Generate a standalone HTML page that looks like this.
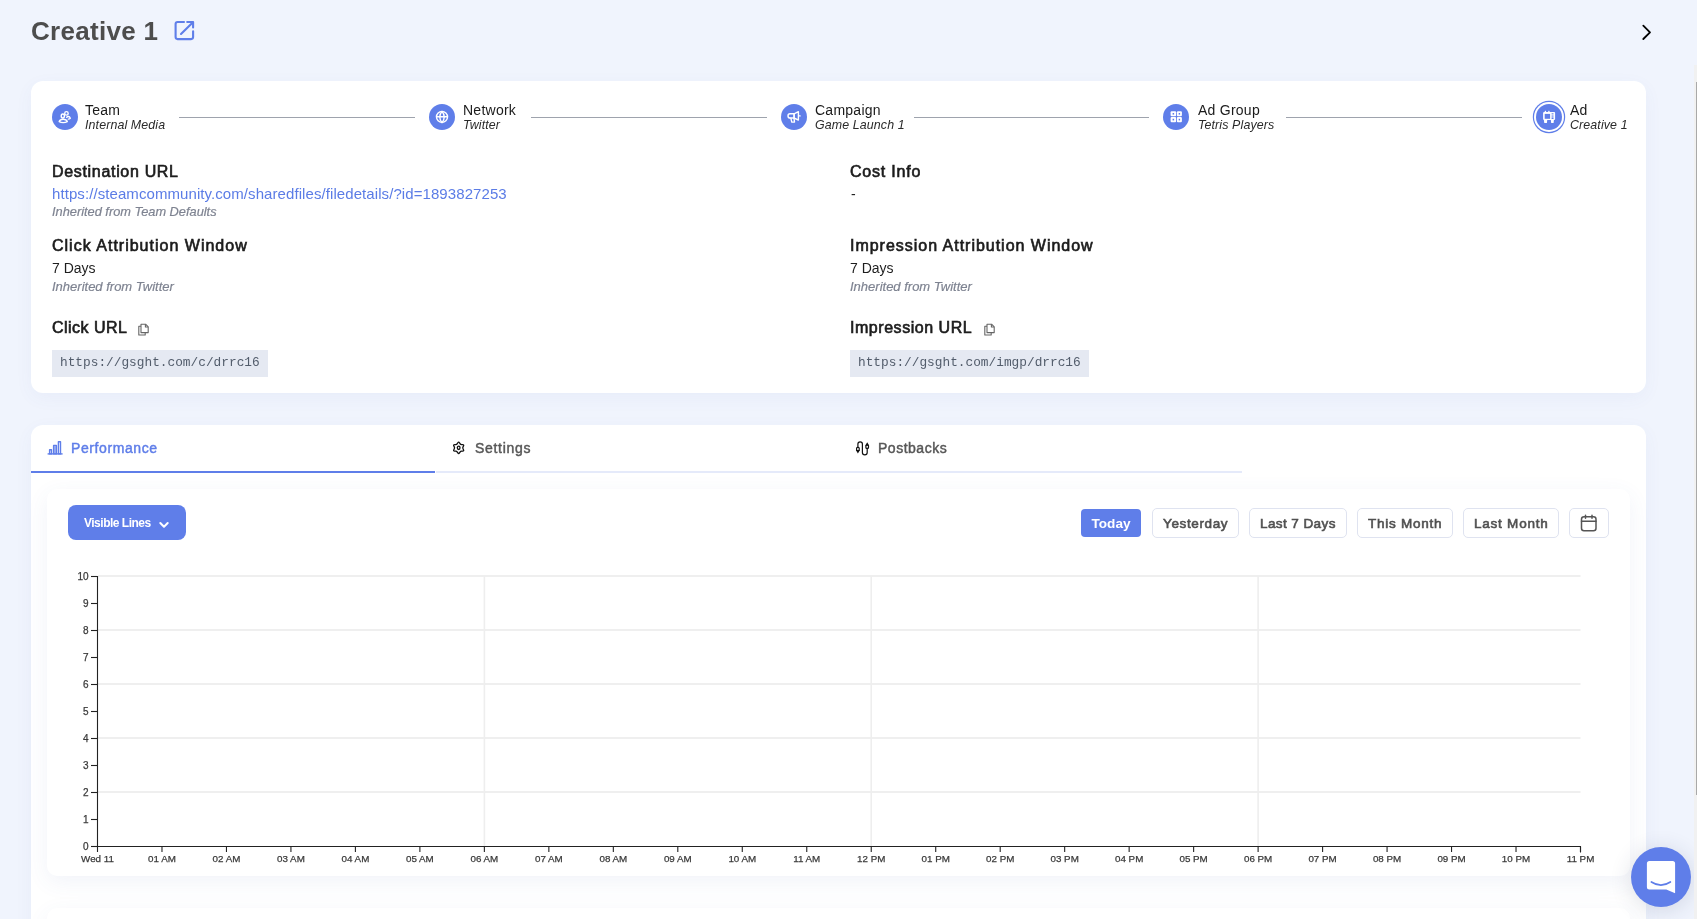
<!DOCTYPE html>
<html><head><meta charset="utf-8"><style>
html,body{margin:0;padding:0;}
body{width:1697px;height:919px;overflow:hidden;background:#f0f4fd;position:relative;font-family:'Liberation Sans', sans-serif;}
.a{position:absolute;box-sizing:content-box;}
.t{position:absolute;white-space:nowrap;line-height:1;will-change:transform;}
.c{text-align:center;font-family:'Liberation Sans', sans-serif;will-change:transform;}
</style></head><body>
<div class="t" style="left:30.80px;top:17.99px;font-size:26px;font-weight:bold;font-style:normal;color:#4d4d4d;letter-spacing:0.300px;font-family:'Liberation Sans', sans-serif;">Creative 1</div>
<svg class="a" style="left:170px;top:17px" width="28" height="28" viewBox="0 0 28 28" fill="none" stroke="#5f7ee9" stroke-width="2.1" stroke-linecap="round" stroke-linejoin="round"><path d="M14 5H7.6a2 2 0 0 0-2 2V20.1a2 2 0 0 0 2 2H21.1a2 2 0 0 0 2-2V14.2"/><path d="M17.2 5H23.1V10.4"/><path d="M22.7 5.4 11 17"/></svg>
<svg class="a" style="left:1636px;top:20px" width="24" height="24" viewBox="0 0 24 24" fill="none" stroke="#000" stroke-width="1.8" stroke-linecap="round" stroke-linejoin="round"><path d="M7.3 5.7 14 12.3 7.3 19"/></svg>
<div class="a" style="left:31px;top:81px;width:1615px;height:312px;background:#fff;border-radius:12px;box-shadow:0 5px 18px rgba(70,95,170,0.05)"></div>
<div class="a" style="left:52px;top:104px;width:26px;height:26px;background:#5f7ee9;border-radius:50%;"></div>
<svg class="a" style="left:52px;top:104px" width="26" height="26" viewBox="0 0 26 26" fill="none" stroke="#fff" stroke-width="1.4" stroke-linecap="round" stroke-linejoin="round"><ellipse cx="10.8" cy="12" rx="1.6" ry="2"/><ellipse cx="14.45" cy="9.4" rx="1.75" ry="1.75"/><path d="M7.2 17.6C7.8 15.9 9.3 15.2 11.2 15.2S14.6 15.9 15.3 17.6C14.1 18.3 12.7 18.6 11.2 18.6S8.4 18.3 7.2 17.6Z"/><path d="M14.7 13.2C15.2 12.7 15.8 12.5 16.3 12.5 17.2 12.5 17.9 13.1 18.3 14.2 17.8 14.7 17.1 15 16.3 15.1"/></svg>
<div class="t" style="left:85.40px;top:103.15px;font-size:14px;font-weight:normal;font-style:normal;color:#1a1a1a;letter-spacing:0.250px;font-family:'Liberation Sans', sans-serif;">Team</div>
<div class="t" style="left:85.40px;top:118.90px;font-size:12.4px;font-weight:normal;font-style:italic;color:#2a2a2a;letter-spacing:0.120px;font-family:'Liberation Sans', sans-serif;">Internal Media</div>
<div class="a" style="left:429px;top:104px;width:26px;height:26px;background:#5f7ee9;border-radius:50%;"></div>
<svg class="a" style="left:429px;top:104px" width="26" height="26" viewBox="0 0 26 26" fill="none" stroke="#fff" stroke-width="1.4" stroke-linecap="round" stroke-linejoin="round"><circle cx="13" cy="12.95" r="5.5"/><path d="M7.5 12.8h11"/><path d="M13 7.45c-1.5 1.5-2.2 3.5-2.2 5.5s.7 4 2.2 5.5c1.5-1.5 2.2-3.5 2.2-5.5s-.7-4-2.2-5.5z"/></svg>
<div class="t" style="left:462.80px;top:103.15px;font-size:14px;font-weight:normal;font-style:normal;color:#1a1a1a;letter-spacing:0.250px;font-family:'Liberation Sans', sans-serif;">Network</div>
<div class="t" style="left:462.80px;top:118.90px;font-size:12.4px;font-weight:normal;font-style:italic;color:#2a2a2a;letter-spacing:0.120px;font-family:'Liberation Sans', sans-serif;">Twitter</div>
<div class="a" style="left:781px;top:104px;width:26px;height:26px;background:#5f7ee9;border-radius:50%;"></div>
<svg class="a" style="left:781px;top:104px" width="26" height="26" viewBox="0 0 26 26" fill="none" stroke="#fff" stroke-width="1.4" stroke-linecap="round" stroke-linejoin="round"><path d="M13.1 9.8H9.1a2.1 2.1 0 0 0 0 4.2H13.1Z"/><path d="M13.1 9.8 17.4 7.7V16.1L13.1 14Z"/><path d="M17.9 11.9h1.2"/><path d="M9.9 14.3 10.8 18.1H13.5L13 14.3"/></svg>
<div class="t" style="left:814.70px;top:103.15px;font-size:14px;font-weight:normal;font-style:normal;color:#1a1a1a;letter-spacing:0.250px;font-family:'Liberation Sans', sans-serif;">Campaign</div>
<div class="t" style="left:814.70px;top:118.90px;font-size:12.4px;font-weight:normal;font-style:italic;color:#2a2a2a;letter-spacing:0.120px;font-family:'Liberation Sans', sans-serif;">Game Launch 1</div>
<div class="a" style="left:1163.2px;top:104px;width:26px;height:26px;background:#5f7ee9;border-radius:50%;"></div>
<svg class="a" style="left:1163.2px;top:104px" width="26" height="26" viewBox="0 0 26 26" fill="none" stroke="#fff" stroke-width="1.4" stroke-linecap="round" stroke-linejoin="round"><g fill="#fff" stroke="none"><rect x="7.6" y="7.2" width="5.5" height="5.1" rx="1"/><rect x="13.9" y="7.2" width="5" height="5.1" rx="1"/><rect x="7.6" y="13" width="5.5" height="5.2" rx="1"/><rect x="13.9" y="13" width="5" height="5.2" rx="1"/></g><g fill="#5f7ee9" stroke="none"><rect x="9.6" y="9" width="1.5" height="1.6"/><rect x="15.7" y="9" width="1.4" height="1.6"/><rect x="9.6" y="14.8" width="1.5" height="1.6"/><rect x="15.7" y="14.8" width="1.4" height="1.6"/></g></svg>
<div class="t" style="left:1197.50px;top:103.15px;font-size:14px;font-weight:normal;font-style:normal;color:#1a1a1a;letter-spacing:0.250px;font-family:'Liberation Sans', sans-serif;">Ad Group</div>
<div class="t" style="left:1197.50px;top:118.90px;font-size:12.4px;font-weight:normal;font-style:italic;color:#2a2a2a;letter-spacing:0.120px;font-family:'Liberation Sans', sans-serif;">Tetris Players</div>
<div class="a" style="left:1536px;top:104px;width:26px;height:26px;background:#5f7ee9;border-radius:50%;box-shadow:0 0 0 2px #fff,0 0 0 3.2px #5f7ee9;"></div>
<svg class="a" style="left:1536px;top:104px" width="26" height="26" viewBox="0 0 26 26" fill="none" stroke="#fff" stroke-width="1.4" stroke-linecap="round" stroke-linejoin="round"><g fill="#fff" stroke="none"><rect x="7.1" y="8" width="12" height="7.9" rx="1"/><path d="M7.8 15.6H11.3L10.9 19H8.3Z"/><path d="M14.8 15.6H18L17.6 19H15.2Z"/><rect x="8.7" y="6.7" width="1.4" height="1.6" rx=".5"/><rect x="12.2" y="6.7" width="1.4" height="1.6" rx=".5"/></g><g fill="#5f7ee9" stroke="none"><rect x="8.7" y="9.9" width="5.4" height="4.9"/><rect x="15.6" y="9.3" width="1.9" height="1.1"/><rect x="15.6" y="11.5" width="1.9" height="1.1"/><rect x="15.6" y="13.4" width="1.9" height="1.6"/></g></svg>
<div class="t" style="left:1569.80px;top:103.15px;font-size:14px;font-weight:normal;font-style:normal;color:#1a1a1a;letter-spacing:0.250px;font-family:'Liberation Sans', sans-serif;">Ad</div>
<div class="t" style="left:1569.80px;top:118.90px;font-size:12.4px;font-weight:normal;font-style:italic;color:#2a2a2a;letter-spacing:0.120px;font-family:'Liberation Sans', sans-serif;">Creative 1</div>
<div class="a" style="left:179px;top:116.5px;width:236px;height:1px;background:#9ea3ad"></div>
<div class="a" style="left:531px;top:116.5px;width:236px;height:1px;background:#9ea3ad"></div>
<div class="a" style="left:914px;top:116.5px;width:235px;height:1px;background:#9ea3ad"></div>
<div class="a" style="left:1286px;top:116.5px;width:236px;height:1px;background:#9ea3ad"></div>
<div class="t" style="left:52.10px;top:164.26px;font-size:16px;font-weight:normal;font-style:normal;color:#1c1c1c;letter-spacing:0.679px;font-family:'Liberation Sans', sans-serif;-webkit-text-stroke:0.65px #1c1c1c;">Destination URL</div>
<div class="t" style="left:52.00px;top:185.70px;font-size:15px;font-weight:normal;font-style:normal;color:#5b7ce6;letter-spacing:0.080px;font-family:'Liberation Sans', sans-serif;">https://steamcommunity.com/sharedfiles/filedetails/?id=1893827253</div>
<div class="t" style="left:51.70px;top:205.76px;font-size:12.8px;font-weight:normal;font-style:italic;color:#7e8391;letter-spacing:0.000px;font-family:'Liberation Sans', sans-serif;-webkit-text-stroke:0.2px #7e8391;">Inherited from Team Defaults</div>
<div class="t" style="left:52.10px;top:237.96px;font-size:16px;font-weight:normal;font-style:normal;color:#1c1c1c;letter-spacing:1.004px;font-family:'Liberation Sans', sans-serif;-webkit-text-stroke:0.65px #1c1c1c;">Click Attribution Window</div>
<div class="t" style="left:51.70px;top:260.95px;font-size:14px;font-weight:normal;font-style:normal;color:#1e1e1e;letter-spacing:0.000px;font-family:'Liberation Sans', sans-serif;">7 Days</div>
<div class="t" style="left:51.70px;top:279.70px;font-size:13px;font-weight:normal;font-style:italic;color:#7e8391;letter-spacing:0.000px;font-family:'Liberation Sans', sans-serif;-webkit-text-stroke:0.2px #7e8391;">Inherited from Twitter</div>
<div class="t" style="left:52.10px;top:320.26px;font-size:16px;font-weight:normal;font-style:normal;color:#1c1c1c;letter-spacing:0.473px;font-family:'Liberation Sans', sans-serif;-webkit-text-stroke:0.65px #1c1c1c;">Click URL</div>
<div class="t" style="left:850.30px;top:164.26px;font-size:16px;font-weight:normal;font-style:normal;color:#1c1c1c;letter-spacing:0.784px;font-family:'Liberation Sans', sans-serif;-webkit-text-stroke:0.65px #1c1c1c;">Cost Info</div>
<div class="t" style="left:850.70px;top:186.55px;font-size:14px;font-weight:normal;font-style:normal;color:#222;letter-spacing:0.000px;font-family:'Liberation Sans', sans-serif;">-</div>
<div class="t" style="left:850.30px;top:237.96px;font-size:16px;font-weight:normal;font-style:normal;color:#1c1c1c;letter-spacing:0.979px;font-family:'Liberation Sans', sans-serif;-webkit-text-stroke:0.65px #1c1c1c;">Impression Attribution Window</div>
<div class="t" style="left:849.90px;top:260.95px;font-size:14px;font-weight:normal;font-style:normal;color:#1e1e1e;letter-spacing:0.000px;font-family:'Liberation Sans', sans-serif;">7 Days</div>
<div class="t" style="left:849.90px;top:279.70px;font-size:13px;font-weight:normal;font-style:italic;color:#7e8391;letter-spacing:0.000px;font-family:'Liberation Sans', sans-serif;-webkit-text-stroke:0.2px #7e8391;">Inherited from Twitter</div>
<div class="t" style="left:850.30px;top:320.26px;font-size:16px;font-weight:normal;font-style:normal;color:#1c1c1c;letter-spacing:0.539px;font-family:'Liberation Sans', sans-serif;-webkit-text-stroke:0.65px #1c1c1c;">Impression URL</div>
<svg class="a" style="left:137px;top:322px" width="13" height="14" viewBox="0 0 13 14" fill="none" stroke="#666" stroke-width="1.1" stroke-linejoin="round"><path d="M4 2.2h4.6l2.6 2.6v5.8H4z"/><path d="M8.4 2.2v2.8h2.8"/><path d="M4 4.3H1.8V13h6.4v-2.4"/></svg>
<svg class="a" style="left:983px;top:322px" width="13" height="14" viewBox="0 0 13 14" fill="none" stroke="#666" stroke-width="1.1" stroke-linejoin="round"><path d="M4 2.2h4.6l2.6 2.6v5.8H4z"/><path d="M8.4 2.2v2.8h2.8"/><path d="M4 4.3H1.8V13h6.4v-2.4"/></svg>
<div class="a" style="left:52px;top:350px;width:216px;height:27px;background:#e5e9f2"></div>
<div class="a" style="left:850px;top:350px;width:239px;height:27px;background:#e5e9f2"></div>
<div class="t" style="left:60.30px;top:357.36px;font-size:12.8px;font-weight:normal;font-style:normal;color:#525c6b;letter-spacing:0.000px;font-family:'Liberation Mono', monospace;">https://gsght.com/c/drrc16</div>
<div class="t" style="left:858.40px;top:357.36px;font-size:12.8px;font-weight:normal;font-style:normal;color:#525c6b;letter-spacing:0.000px;font-family:'Liberation Mono', monospace;">https://gsght.com/imgp/drrc16</div>
<div class="a" style="left:31px;top:425px;width:1615px;height:600px;background:#fff;border-radius:12px;box-shadow:0 5px 18px rgba(70,95,170,0.05)"></div>
<div class="a" style="left:31px;top:471px;width:404px;height:2px;background:#5f7ee9"></div>
<div class="a" style="left:436px;top:471px;width:806px;height:2px;background:#e5eafa"></div>
<svg class="a" style="left:44px;top:438px" width="22" height="20" viewBox="0 0 22 20" fill="none" stroke="#5f7ee9" stroke-width="1.4" stroke-linejoin="round"><path d="M3.6 15.9h15"/><rect x="5.6" y="11.8" width="1.9" height="4.1"/><rect x="9.6" y="7.4" width="2.8" height="8.5" fill="#5f7ee9" fill-opacity=".55"/><rect x="14.4" y="3.8" width="2.1" height="12.1"/></svg>
<div class="t" style="left:70.60px;top:441.35px;font-size:14px;font-weight:normal;font-style:normal;color:#5f7ee9;letter-spacing:0.596px;font-family:'Liberation Sans', sans-serif;-webkit-text-stroke:0.45px #5f7ee9;">Performance</div>
<svg class="a" style="left:448px;top:438px" width="22" height="20" viewBox="0 0 22 20" fill="none" stroke="#111" stroke-width="1.3" stroke-linejoin="round"><path d="M9.85 4.74 Q10.66 3.45 11.47 4.74 L12.01 5.60 Q12.59 6.52 13.67 6.56 L14.68 6.59 Q16.20 6.65 15.49 7.99 L15.02 8.89 Q14.51 9.85 15.02 10.81 L15.49 11.71 Q16.20 13.05 14.68 13.11 L13.67 13.14 Q12.59 13.18 12.01 14.10 L11.47 14.96 Q10.66 16.25 9.85 14.96 L9.31 14.10 Q8.74 13.18 7.65 13.14 L6.64 13.11 Q5.12 13.05 5.83 11.71 L6.30 10.81 Q6.81 9.85 6.30 8.89 L5.83 7.99 Q5.12 6.65 6.64 6.59 L7.65 6.56 Q8.73 6.52 9.31 5.60Z"/><ellipse cx="10.66" cy="9.85" rx="1.35" ry="1.65"/></svg>
<div class="t" style="left:474.70px;top:441.15px;font-size:14px;font-weight:normal;font-style:normal;color:#575757;letter-spacing:0.702px;font-family:'Liberation Sans', sans-serif;-webkit-text-stroke:0.45px #575757;">Settings</div>
<svg class="a" style="left:852px;top:438px" width="22" height="20" viewBox="0 0 22 20" fill="none" stroke="#111" stroke-width="1.2" stroke-linecap="round"><path d="M5.9 9.3V6.1a2.25 2.25 0 0 1 4.5 0v8.3a2.4 2.4 0 0 0 4.8 0v-4"/><rect x="4.6" y="9.3" width="2.6" height="3.4" rx="0.9"/><path d="M4.9 12.6h2l-1 1.7z" fill="#111"/><rect x="13.9" y="7" width="2.6" height="3.4" rx="0.9"/><path d="M14.2 7.1h2l-1-1.7z" fill="#111"/></svg>
<div class="t" style="left:878.40px;top:441.15px;font-size:14px;font-weight:normal;font-style:normal;color:#575757;letter-spacing:0.515px;font-family:'Liberation Sans', sans-serif;-webkit-text-stroke:0.45px #575757;">Postbacks</div>
<div class="a" style="left:47px;top:489px;width:1583px;height:387px;background:#fff;border-radius:10px;box-shadow:0 6px 22px rgba(70,95,170,0.075)"></div>
<div class="a" style="left:47px;top:908px;width:1583px;height:200px;background:#fff;border-radius:10px;box-shadow:0 6px 22px rgba(70,95,170,0.075)"></div>
<div class="a" style="left:68px;top:505px;width:118px;height:35px;background:#5f7ee9;border-radius:8px"></div>
<div class="t" style="left:84.00px;top:516.64px;font-size:12px;font-weight:bold;font-style:normal;color:#fff;letter-spacing:-0.500px;font-family:'Liberation Sans', sans-serif;">Visible Lines</div>
<svg class="a" style="left:157px;top:518px" width="14" height="14" viewBox="0 0 14 14" fill="none" stroke="#fff" stroke-width="2" stroke-linecap="round" stroke-linejoin="round"><path d="M3.3 5 7 8.7 10.7 5"/></svg>
<div class="a" style="left:1081px;top:509px;width:60px;height:28px;background:#5f7ee9;border-radius:4px"></div>
<div class="a c" style="left:1081px;top:509.8px;width:60px;height:28px;line-height:28px;font-size:13.6px;font-weight:bold;color:#fff">Today</div>
<div class="a" style="left:1152px;top:508px;width:85px;height:28px;border:1px solid #dfe3f0;border-radius:5px;background:#fff"></div>
<div class="t" style="left:1163.20px;top:516.77px;font-size:13.5px;font-weight:normal;font-style:normal;color:#505050;letter-spacing:0.632px;font-family:'Liberation Sans', sans-serif;-webkit-text-stroke:0.6px #505050;">Yesterday</div>
<div class="a" style="left:1249px;top:508px;width:96px;height:28px;border:1px solid #dfe3f0;border-radius:5px;background:#fff"></div>
<div class="t" style="left:1260.40px;top:516.77px;font-size:13.5px;font-weight:normal;font-style:normal;color:#505050;letter-spacing:0.412px;font-family:'Liberation Sans', sans-serif;-webkit-text-stroke:0.6px #505050;">Last 7 Days</div>
<div class="a" style="left:1357px;top:508px;width:94px;height:28px;border:1px solid #dfe3f0;border-radius:5px;background:#fff"></div>
<div class="t" style="left:1368.30px;top:516.77px;font-size:13.5px;font-weight:normal;font-style:normal;color:#505050;letter-spacing:0.748px;font-family:'Liberation Sans', sans-serif;-webkit-text-stroke:0.6px #505050;">This Month</div>
<div class="a" style="left:1463px;top:508px;width:94px;height:28px;border:1px solid #dfe3f0;border-radius:5px;background:#fff"></div>
<div class="t" style="left:1474.10px;top:516.77px;font-size:13.5px;font-weight:normal;font-style:normal;color:#505050;letter-spacing:0.769px;font-family:'Liberation Sans', sans-serif;-webkit-text-stroke:0.6px #505050;">Last Month</div>
<div class="a" style="left:1569px;top:508px;width:38px;height:28px;border:1px solid #dfe3f0;border-radius:5px;background:#fff"></div>
<svg class="a" style="left:1580px;top:514px" width="18" height="18" viewBox="0 0 18 18" fill="none" stroke="#555" stroke-width="1.5" stroke-linecap="round"><rect x="1.5" y="2.8" width="14.5" height="14" rx="2.5"/><path d="M1.5 7.2h14.5M5.5 1.2v3M12 1.2v3"/></svg>
<svg class="a" style="left:0;top:0;will-change:transform" width="1697" height="919" viewBox="0 0 1697 919"><line x1="98" y1="576.1" x2="1580.5" y2="576.1" stroke="#efefef" stroke-width="2"/><line x1="98" y1="630.1" x2="1580.5" y2="630.1" stroke="#efefef" stroke-width="2"/><line x1="98" y1="684.1" x2="1580.5" y2="684.1" stroke="#efefef" stroke-width="2"/><line x1="98" y1="738.1" x2="1580.5" y2="738.1" stroke="#efefef" stroke-width="2"/><line x1="98" y1="792.1" x2="1580.5" y2="792.1" stroke="#efefef" stroke-width="2"/><line x1="484.37" y1="576.5" x2="484.37" y2="846" stroke="#eeeeee" stroke-width="1.6"/><line x1="871.24" y1="576.5" x2="871.24" y2="846" stroke="#eeeeee" stroke-width="1.6"/><line x1="1258.11" y1="576.5" x2="1258.11" y2="846" stroke="#eeeeee" stroke-width="1.6"/><path d="M91 576.5h6.5V846.5H1580.5v6" fill="none" stroke="#222" stroke-width="1.1"/><line x1="91" y1="846.5" x2="97.5" y2="846.5" stroke="#222" stroke-width="1.1"/><text x="88.5" y="850.10" text-anchor="end" font-size="10" fill="#3a3a3a" stroke="#3a3a3a" stroke-width="0.25" font-family="Liberation Sans">0</text><line x1="91" y1="819.5" x2="97.5" y2="819.5" stroke="#222" stroke-width="1.1"/><text x="88.5" y="823.10" text-anchor="end" font-size="10" fill="#3a3a3a" stroke="#3a3a3a" stroke-width="0.25" font-family="Liberation Sans">1</text><line x1="91" y1="792.5" x2="97.5" y2="792.5" stroke="#222" stroke-width="1.1"/><text x="88.5" y="796.10" text-anchor="end" font-size="10" fill="#3a3a3a" stroke="#3a3a3a" stroke-width="0.25" font-family="Liberation Sans">2</text><line x1="91" y1="765.5" x2="97.5" y2="765.5" stroke="#222" stroke-width="1.1"/><text x="88.5" y="769.10" text-anchor="end" font-size="10" fill="#3a3a3a" stroke="#3a3a3a" stroke-width="0.25" font-family="Liberation Sans">3</text><line x1="91" y1="738.5" x2="97.5" y2="738.5" stroke="#222" stroke-width="1.1"/><text x="88.5" y="742.10" text-anchor="end" font-size="10" fill="#3a3a3a" stroke="#3a3a3a" stroke-width="0.25" font-family="Liberation Sans">4</text><line x1="91" y1="711.5" x2="97.5" y2="711.5" stroke="#222" stroke-width="1.1"/><text x="88.5" y="715.10" text-anchor="end" font-size="10" fill="#3a3a3a" stroke="#3a3a3a" stroke-width="0.25" font-family="Liberation Sans">5</text><line x1="91" y1="684.5" x2="97.5" y2="684.5" stroke="#222" stroke-width="1.1"/><text x="88.5" y="688.10" text-anchor="end" font-size="10" fill="#3a3a3a" stroke="#3a3a3a" stroke-width="0.25" font-family="Liberation Sans">6</text><line x1="91" y1="657.5" x2="97.5" y2="657.5" stroke="#222" stroke-width="1.1"/><text x="88.5" y="661.10" text-anchor="end" font-size="10" fill="#3a3a3a" stroke="#3a3a3a" stroke-width="0.25" font-family="Liberation Sans">7</text><line x1="91" y1="630.5" x2="97.5" y2="630.5" stroke="#222" stroke-width="1.1"/><text x="88.5" y="634.10" text-anchor="end" font-size="10" fill="#3a3a3a" stroke="#3a3a3a" stroke-width="0.25" font-family="Liberation Sans">8</text><line x1="91" y1="603.5" x2="97.5" y2="603.5" stroke="#222" stroke-width="1.1"/><text x="88.5" y="607.10" text-anchor="end" font-size="10" fill="#3a3a3a" stroke="#3a3a3a" stroke-width="0.25" font-family="Liberation Sans">9</text><line x1="91" y1="576.5" x2="97.5" y2="576.5" stroke="#222" stroke-width="1.1"/><text x="88.5" y="580.10" text-anchor="end" font-size="10" fill="#3a3a3a" stroke="#3a3a3a" stroke-width="0.25" font-family="Liberation Sans">10</text><line x1="97.50" y1="846.5" x2="97.50" y2="852" stroke="#222" stroke-width="1.1"/><text x="97.50" y="861.8" text-anchor="middle" font-size="9.8" fill="#3a3a3a" stroke="#3a3a3a" stroke-width="0.25" font-family="Liberation Sans">Wed 11</text><line x1="161.98" y1="846.5" x2="161.98" y2="852" stroke="#222" stroke-width="1.1"/><text x="161.98" y="861.8" text-anchor="middle" font-size="9.8" fill="#3a3a3a" stroke="#3a3a3a" stroke-width="0.25" font-family="Liberation Sans">01 AM</text><line x1="226.46" y1="846.5" x2="226.46" y2="852" stroke="#222" stroke-width="1.1"/><text x="226.46" y="861.8" text-anchor="middle" font-size="9.8" fill="#3a3a3a" stroke="#3a3a3a" stroke-width="0.25" font-family="Liberation Sans">02 AM</text><line x1="290.93" y1="846.5" x2="290.93" y2="852" stroke="#222" stroke-width="1.1"/><text x="290.93" y="861.8" text-anchor="middle" font-size="9.8" fill="#3a3a3a" stroke="#3a3a3a" stroke-width="0.25" font-family="Liberation Sans">03 AM</text><line x1="355.41" y1="846.5" x2="355.41" y2="852" stroke="#222" stroke-width="1.1"/><text x="355.41" y="861.8" text-anchor="middle" font-size="9.8" fill="#3a3a3a" stroke="#3a3a3a" stroke-width="0.25" font-family="Liberation Sans">04 AM</text><line x1="419.89" y1="846.5" x2="419.89" y2="852" stroke="#222" stroke-width="1.1"/><text x="419.89" y="861.8" text-anchor="middle" font-size="9.8" fill="#3a3a3a" stroke="#3a3a3a" stroke-width="0.25" font-family="Liberation Sans">05 AM</text><line x1="484.37" y1="846.5" x2="484.37" y2="852" stroke="#222" stroke-width="1.1"/><text x="484.37" y="861.8" text-anchor="middle" font-size="9.8" fill="#3a3a3a" stroke="#3a3a3a" stroke-width="0.25" font-family="Liberation Sans">06 AM</text><line x1="548.85" y1="846.5" x2="548.85" y2="852" stroke="#222" stroke-width="1.1"/><text x="548.85" y="861.8" text-anchor="middle" font-size="9.8" fill="#3a3a3a" stroke="#3a3a3a" stroke-width="0.25" font-family="Liberation Sans">07 AM</text><line x1="613.33" y1="846.5" x2="613.33" y2="852" stroke="#222" stroke-width="1.1"/><text x="613.33" y="861.8" text-anchor="middle" font-size="9.8" fill="#3a3a3a" stroke="#3a3a3a" stroke-width="0.25" font-family="Liberation Sans">08 AM</text><line x1="677.80" y1="846.5" x2="677.80" y2="852" stroke="#222" stroke-width="1.1"/><text x="677.80" y="861.8" text-anchor="middle" font-size="9.8" fill="#3a3a3a" stroke="#3a3a3a" stroke-width="0.25" font-family="Liberation Sans">09 AM</text><line x1="742.28" y1="846.5" x2="742.28" y2="852" stroke="#222" stroke-width="1.1"/><text x="742.28" y="861.8" text-anchor="middle" font-size="9.8" fill="#3a3a3a" stroke="#3a3a3a" stroke-width="0.25" font-family="Liberation Sans">10 AM</text><line x1="806.76" y1="846.5" x2="806.76" y2="852" stroke="#222" stroke-width="1.1"/><text x="806.76" y="861.8" text-anchor="middle" font-size="9.8" fill="#3a3a3a" stroke="#3a3a3a" stroke-width="0.25" font-family="Liberation Sans">11 AM</text><line x1="871.24" y1="846.5" x2="871.24" y2="852" stroke="#222" stroke-width="1.1"/><text x="871.24" y="861.8" text-anchor="middle" font-size="9.8" fill="#3a3a3a" stroke="#3a3a3a" stroke-width="0.25" font-family="Liberation Sans">12 PM</text><line x1="935.72" y1="846.5" x2="935.72" y2="852" stroke="#222" stroke-width="1.1"/><text x="935.72" y="861.8" text-anchor="middle" font-size="9.8" fill="#3a3a3a" stroke="#3a3a3a" stroke-width="0.25" font-family="Liberation Sans">01 PM</text><line x1="1000.20" y1="846.5" x2="1000.20" y2="852" stroke="#222" stroke-width="1.1"/><text x="1000.20" y="861.8" text-anchor="middle" font-size="9.8" fill="#3a3a3a" stroke="#3a3a3a" stroke-width="0.25" font-family="Liberation Sans">02 PM</text><line x1="1064.67" y1="846.5" x2="1064.67" y2="852" stroke="#222" stroke-width="1.1"/><text x="1064.67" y="861.8" text-anchor="middle" font-size="9.8" fill="#3a3a3a" stroke="#3a3a3a" stroke-width="0.25" font-family="Liberation Sans">03 PM</text><line x1="1129.15" y1="846.5" x2="1129.15" y2="852" stroke="#222" stroke-width="1.1"/><text x="1129.15" y="861.8" text-anchor="middle" font-size="9.8" fill="#3a3a3a" stroke="#3a3a3a" stroke-width="0.25" font-family="Liberation Sans">04 PM</text><line x1="1193.63" y1="846.5" x2="1193.63" y2="852" stroke="#222" stroke-width="1.1"/><text x="1193.63" y="861.8" text-anchor="middle" font-size="9.8" fill="#3a3a3a" stroke="#3a3a3a" stroke-width="0.25" font-family="Liberation Sans">05 PM</text><line x1="1258.11" y1="846.5" x2="1258.11" y2="852" stroke="#222" stroke-width="1.1"/><text x="1258.11" y="861.8" text-anchor="middle" font-size="9.8" fill="#3a3a3a" stroke="#3a3a3a" stroke-width="0.25" font-family="Liberation Sans">06 PM</text><line x1="1322.59" y1="846.5" x2="1322.59" y2="852" stroke="#222" stroke-width="1.1"/><text x="1322.59" y="861.8" text-anchor="middle" font-size="9.8" fill="#3a3a3a" stroke="#3a3a3a" stroke-width="0.25" font-family="Liberation Sans">07 PM</text><line x1="1387.07" y1="846.5" x2="1387.07" y2="852" stroke="#222" stroke-width="1.1"/><text x="1387.07" y="861.8" text-anchor="middle" font-size="9.8" fill="#3a3a3a" stroke="#3a3a3a" stroke-width="0.25" font-family="Liberation Sans">08 PM</text><line x1="1451.54" y1="846.5" x2="1451.54" y2="852" stroke="#222" stroke-width="1.1"/><text x="1451.54" y="861.8" text-anchor="middle" font-size="9.8" fill="#3a3a3a" stroke="#3a3a3a" stroke-width="0.25" font-family="Liberation Sans">09 PM</text><line x1="1516.02" y1="846.5" x2="1516.02" y2="852" stroke="#222" stroke-width="1.1"/><text x="1516.02" y="861.8" text-anchor="middle" font-size="9.8" fill="#3a3a3a" stroke="#3a3a3a" stroke-width="0.25" font-family="Liberation Sans">10 PM</text><line x1="1580.50" y1="846.5" x2="1580.50" y2="852" stroke="#222" stroke-width="1.1"/><text x="1580.50" y="861.8" text-anchor="middle" font-size="9.8" fill="#3a3a3a" stroke="#3a3a3a" stroke-width="0.25" font-family="Liberation Sans">11 PM</text></svg>
<div class="a" style="left:1631px;top:847px;width:60px;height:60px;background:#5f7ee9;border-radius:50%;box-shadow:0 3px 22px rgba(40,50,90,0.16)"></div>
<svg class="a" style="left:1645px;top:859px" width="34" height="38" viewBox="0 0 34 38"><path d="M4.4 1.9H27.6a2.5 2.5 0 0 1 2.5 2.5V34.2L21.3 30.4H4.4a2.5 2.5 0 0 1-2.5-2.5V4.4a2.5 2.5 0 0 1 2.5-2.5z" fill="#fff"/><path d="M6.4 23Q15.9 29.2 25.4 23" fill="none" stroke="#5f7ee9" stroke-width="1.7" stroke-linecap="round"/></svg>
<div class="a" style="left:1694px;top:65px;width:3px;height:854px;background:#f1f1f1"></div>
<div class="a" style="left:1696px;top:82px;width:1px;height:713px;background:#a9a9a9"></div>
</body></html>
